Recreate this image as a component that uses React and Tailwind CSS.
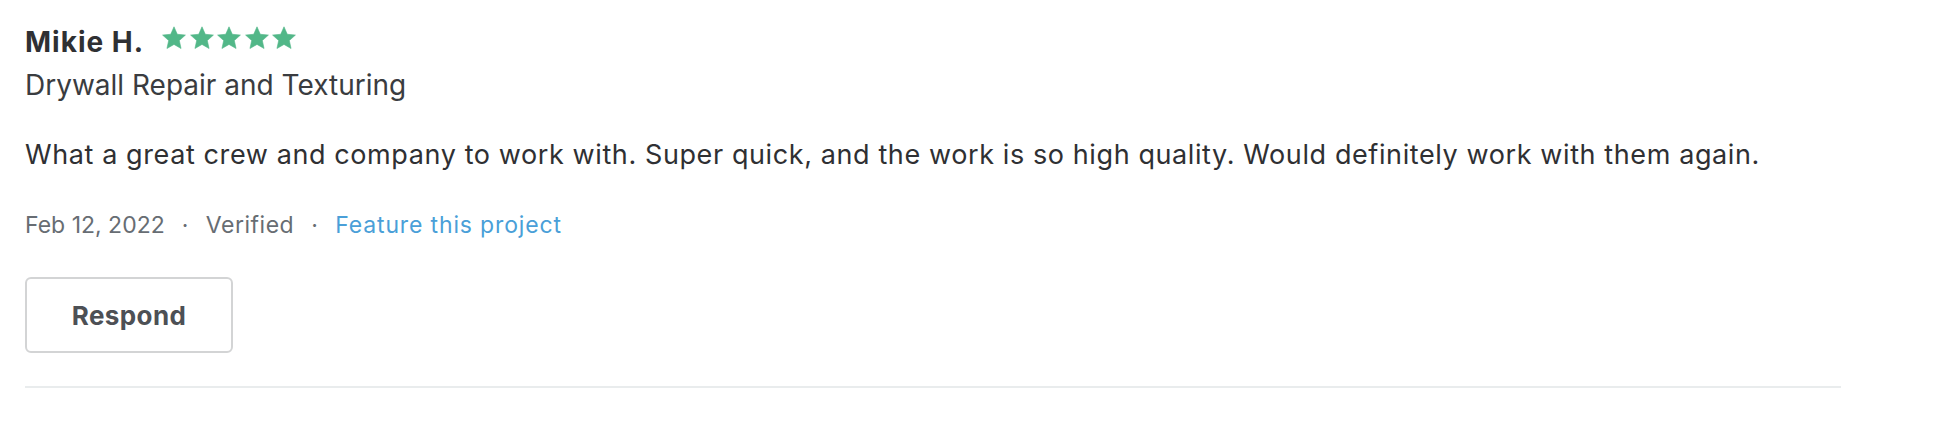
import React from 'react';

const Star = () => (
  <svg viewBox="0 0 24 24" className="w-[24px] h-[24px]" fill="#52b788" stroke="#52b788" strokeWidth="0.6" strokeLinejoin="round">
    <path d="M12 0.8L15.29 8.27L23.41 9.09L17.33 14.53L19.05 22.51L12 18.4L4.95 22.51L6.67 14.53L0.59 9.09L8.71 8.27Z" />
  </svg>
);

const Review = () => (
  <div className="pl-[25px] pt-[24px] font-['Inter','Liberation_Sans',sans-serif]">
    <div className="flex items-start">
      <h3 className="text-[28px] leading-[36px] font-bold tracking-[1px] text-[#2f3033]">Mikie H.</h3>
      <div className="flex gap-[3.5px] ml-[18px] mt-[2px]">
        <Star />
        <Star />
        <Star />
        <Star />
        <Star />
      </div>
    </div>
    <p className="mt-[7px] text-[28px] leading-[36px] text-[#3a3c40]">Drywall Repair and Texturing</p>

    <p className="mt-[34px] text-[27px] leading-[36px] tracking-[0.6px] text-[#2f3033]">
      What a great crew and company to work with. Super quick, and the work is so high quality. Would definitely work with them again.
    </p>

    <div className="mt-[37px] flex items-center gap-[17px] text-[23px] leading-[30px] tracking-[0.5px] text-[#676d73]">
      <span className="tracking-normal">Feb 12, 2022</span>
      <span>·</span>
      <span>Verified</span>
      <span>·</span>
      <span className="text-[#4a9fd8] tracking-[0.85px]">Feature this project</span>
    </div>

    <button className="mt-[37px] w-[208px] h-[76px] border-2 border-[#d3d4d5] rounded-[6px] bg-white text-[26px] font-bold tracking-[0.4px] text-[#4d5055]">
      Respond
    </button>

    <div className="mt-[33px] w-[1816px] h-[2px] bg-[#e9eced]"></div>
  </div>
);

export default function App() {
  return (
    <div className="bg-white min-h-[422px] w-full">
      <Review />
    </div>
  );
}
